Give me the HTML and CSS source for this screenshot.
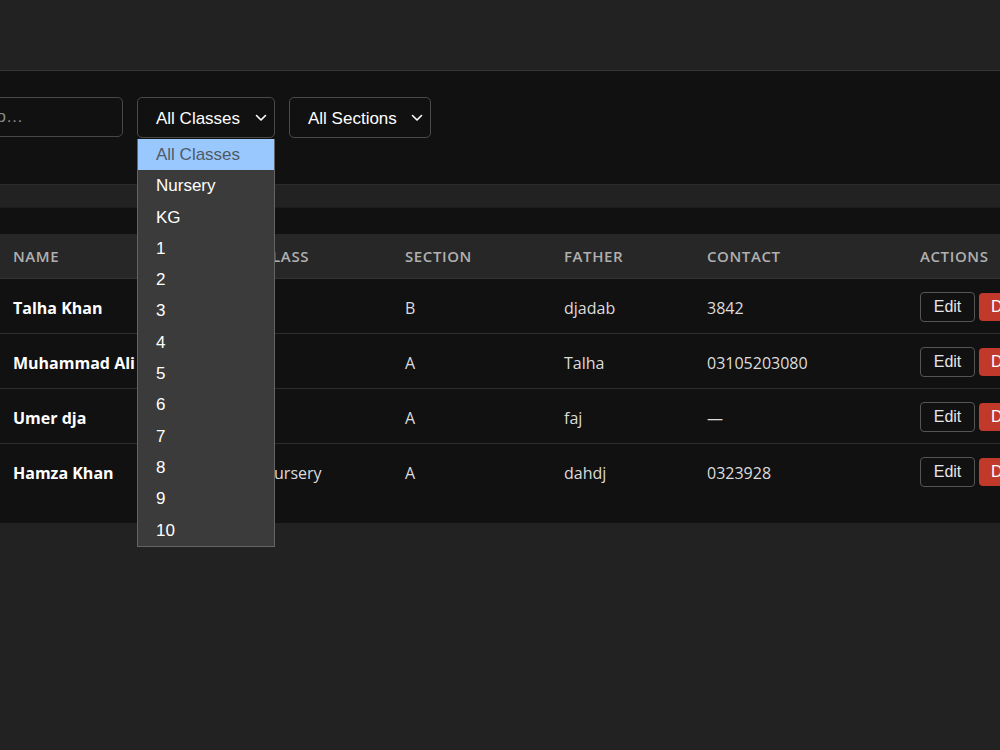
FILE: index.html
```html
<!DOCTYPE html>
<html lang="en">
  <head>
    <meta charset="UTF-8" />
    <meta name="viewport" content="width=device-width, initial-scale=1.0" />
    <title>Students</title>
    <link rel="stylesheet" href="styles.css">
  </head>
  <body>
    <div class="topbar"></div>

    <div class="filters">
      <input class="search" type="text" placeholder="Search by name o…" />
      <div class="select-wrap">
        <div class="select">
          <span>All Classes</span>
          <svg class="chev" width="12" height="8" viewBox="0 0 12 8"><path d="M1.5 1.5 6 6l4.5-4.5" fill="none" stroke="#fff" stroke-width="1.6" stroke-linecap="round" stroke-linejoin="round"/></svg>
        </div>
        <ul class="options">
          <li class="active">All Classes</li>
          <li>Nursery</li>
          <li>KG</li>
          <li>1</li>
          <li>2</li>
          <li>3</li>
          <li>4</li>
          <li>5</li>
          <li>6</li>
          <li>7</li>
          <li>8</li>
          <li>9</li>
          <li>10</li>
        </ul>
      </div>
      <div class="select-wrap">
        <div class="select wide">
          <span>All Sections</span>
          <svg class="chev" width="12" height="8" viewBox="0 0 12 8"><path d="M1.5 1.5 6 6l4.5-4.5" fill="none" stroke="#fff" stroke-width="1.6" stroke-linecap="round" stroke-linejoin="round"/></svg>
        </div>
      </div>
    </div>

    <div class="table-card">
      <table class="students">
        <thead>
          <tr>
            <th class="c-name">Name</th>
            <th class="c-class">Class</th>
            <th class="c-section">Section</th>
            <th class="c-father">Father</th>
            <th class="c-contact">Contact</th>
            <th class="c-actions">Actions</th>
          </tr>
        </thead>
        <tbody>
          <tr>
            <td class="name">Talha Khan</td>
            <td>1</td>
            <td>B</td>
            <td>djadab</td>
            <td>3842</td>
            <td><button class="btn-edit">Edit</button><button class="btn-del">Delete</button></td>
          </tr>
          <tr>
            <td class="name">Muhammad Ali</td>
            <td>2</td>
            <td>A</td>
            <td>Talha</td>
            <td>03105203080</td>
            <td><button class="btn-edit">Edit</button><button class="btn-del">Delete</button></td>
          </tr>
          <tr>
            <td class="name">Umer dja</td>
            <td>3</td>
            <td>A</td>
            <td>faj</td>
            <td>—</td>
            <td><button class="btn-edit">Edit</button><button class="btn-del">Delete</button></td>
          </tr>
          <tr class="last">
            <td class="name">Hamza Khan</td>
            <td>Nursery</td>
            <td>A</td>
            <td>dahdj</td>
            <td>0323928</td>
            <td><button class="btn-edit">Edit</button><button class="btn-del">Delete</button></td>
          </tr>
        </tbody>
      </table>
    </div>
  </body>
</html>
```

FILE: styles.css
```css
body {
  margin: 0;
  padding: 0;
  background-color: #222;
  color: #ddd;
  font-family: "Open Sans", "Noto Sans", sans-serif;
  overflow: hidden;
  width: 1000px;
  height: 750px;
}

.topbar {
  height: 70px;
  background-color: #222;
  border-bottom: 1px solid #353535;
}

.filters {
  display: flex;
  align-items: flex-start;
  gap: 14px;
  height: 114px;
  padding-top: 26px;
  box-sizing: border-box;
  background-color: #111;
  border-bottom: 1px solid #2c2c2c;
}

.search {
  width: 270px;
  height: 40px;
  margin-left: -147px;
  box-sizing: border-box;
  background-color: #111;
  border: 1px solid #484848;
  border-radius: 5px;
  padding: 0 14px;
  color: #ddd;
  font-family: "Liberation Sans", Arial, sans-serif;
  font-size: 17px;
  outline: none;
}

.search::placeholder {
  color: #8a8a8a;
}

.select-wrap {
  position: relative;
}

.select {
  display: flex;
  align-items: center;
  justify-content: space-between;
  width: 138px;
  height: 41px;
  box-sizing: border-box;
  padding: 0 7px 0 18px;
  background-color: #111;
  border: 1px solid #4a4a4a;
  border-radius: 5px;
  color: #fff;
  font-family: "Liberation Sans", Arial, sans-serif;
  font-size: 17px;
}

.select span {
  padding-top: 2px;
}

.select.wide {
  width: 142px;
}

.chev {
  display: block;
}

.options {
  position: absolute;
  top: 42px;
  left: 0;
  width: 138px;
  box-sizing: border-box;
  margin: 0;
  padding: 0;
  list-style: none;
  background-color: #3b3b3b;
  border: 1px solid #646464;
  border-top: none;
  z-index: 10;
  font-family: "Liberation Sans", Arial, sans-serif;
  font-size: 17px;
  color: #fff;
}

.options li {
  height: 31.3px;
  line-height: 32px;
  padding-left: 18px;
}

.options li.active {
  background-color: #99c8ff;
  color: #505a66;
}

.table-card {
  margin-top: 22px;
  padding: 26px 0 25px;
  background-color: #111;
  border-top: 1px solid #1c1c1c;
}

.students {
  border-collapse: collapse;
  width: 1120px;
  table-layout: fixed;
}

.students th {
  background-color: #272727;
  color: #b0b0b0;
  text-align: left;
  font-size: 15px;
  font-weight: 600;
  letter-spacing: 0.6px;
  text-transform: uppercase;
  padding: 12px 13px;
  line-height: 20px;
  border-bottom: 1px solid #333;
}

.students td {
  height: 30px;
  padding: 14px 13px 10px;
  line-height: 30px;
  font-size: 16px;
  color: #dcdcdc;
  border-bottom: 1px solid #2e2e2e;
  white-space: nowrap;
  overflow: hidden;
}

.students tr.last td {
  border-bottom: none;
}

.students td.name {
  color: #fff;
  font-weight: 700;
}

.c-name { width: 223px; }
.c-class { width: 117px; }
.c-section { width: 133px; }
.c-father { width: 117px; }
.c-contact { width: 187px; }

.btn-edit,
.btn-del {
  height: 30px;
  margin: -1px 0 0;
  padding: 0 12px;
  border-radius: 4px;
  font-family: "Liberation Sans", Arial, sans-serif;
  font-size: 16px;
  vertical-align: top;
  cursor: pointer;
}

.btn-edit {
  background-color: #111;
  color: #e6e6e6;
  border: 1px solid #555;
  width: 55px;
}

.btn-del {
  margin: 0 0 0 4px;
  background-color: #c0392b;
  color: #fff;
  border: none;
  height: 28px;
}
```
